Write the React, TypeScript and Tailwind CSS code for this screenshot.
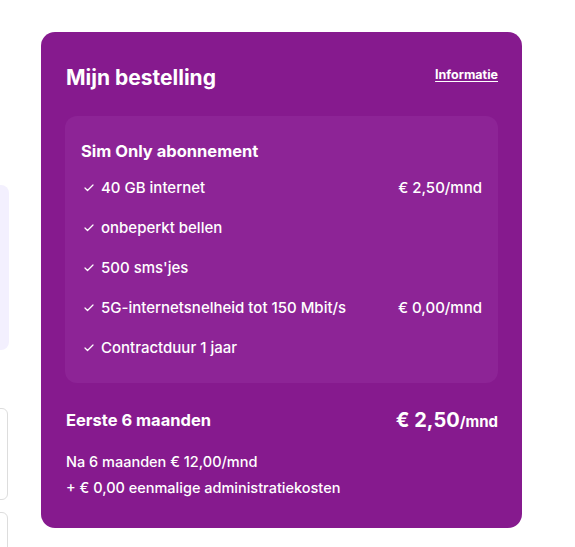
import { Check } from "lucide-react";

const regels = [
  { tekst: "40 GB internet", prijs: "€ 2,50/mnd" },
  { tekst: "onbeperkt bellen" },
  { tekst: "500 sms'jes" },
  { tekst: "5G-internetsnelheid tot 150 Mbit/s", prijs: "€ 0,00/mnd" },
  { tekst: "Contractduur 1 jaar" },
];

export default function App() {
  return (
    <div
      className="flex h-[547px] w-[575px] overflow-hidden bg-white text-white"
      style={{ fontFamily: "Inter, 'Noto Sans', sans-serif" }}
    >
      {/* stukje van de linkerkolom dat nog in beeld valt */}
      <div className="relative w-[9px] shrink-0">
        <div className="absolute right-0 top-[185px] h-[165px] w-[40px] rounded-lg bg-[#f3f0fe]" />
        <div className="absolute right-[1px] top-[408px] h-[92px] w-[40px] rounded-md border border-[#dddddd]" />
        <div className="absolute right-[1px] top-[512px] h-[92px] w-[40px] rounded-md border border-[#dddddd]" />
      </div>

      <div className="ml-[32px] mt-[32px] h-[496px] w-[481px] shrink-0 rounded-[14px] bg-[#861a8e] px-6 pt-[32px]">
        <div className="flex items-start justify-between pl-[1px]">
          <h2 className="text-[21px] font-bold leading-[28px]">Mijn bestelling</h2>
          <a href="#" className="mt-[1px] text-[12.5px] font-bold leading-[20px] underline underline-offset-[2px]">
            Informatie
          </a>
        </div>

        <div className="mt-[24px] rounded-xl bg-[#8d2496] px-4 pb-[15px] pt-6">
          <h3 className="text-[16.5px] font-bold leading-[22px]">Sim Only abonnement</h3>
          <ul className="mt-[6px]">
            {regels.map((r) => (
              <li key={r.tekst} className="flex h-10 items-center justify-between text-[15px] font-medium">
                <span className="flex items-center gap-[6px] pl-[2px]">
                  <Check size={12} strokeWidth={2.5} />
                  {r.tekst}
                </span>
                {r.prijs && <span>{r.prijs}</span>}
              </li>
            ))}
          </ul>
        </div>

        <div className="mt-[22px] flex items-center justify-between pl-[1px]">
          <span className="text-[16.5px] font-bold leading-6">Eerste 6 maanden</span>
          <span className="font-bold">
            <span className="text-[20px]">€ 2,50</span>
            <span className="text-[15px]">/mnd</span>
          </span>
        </div>
        <div className="mt-[14px] pl-[1px] text-[14.5px] font-medium leading-[26px]">
          <p>Na 6 maanden € 12,00/mnd</p>
          <p>+ € 0,00 eenmalige administratiekosten</p>
        </div>
      </div>
    </div>
  );
}
